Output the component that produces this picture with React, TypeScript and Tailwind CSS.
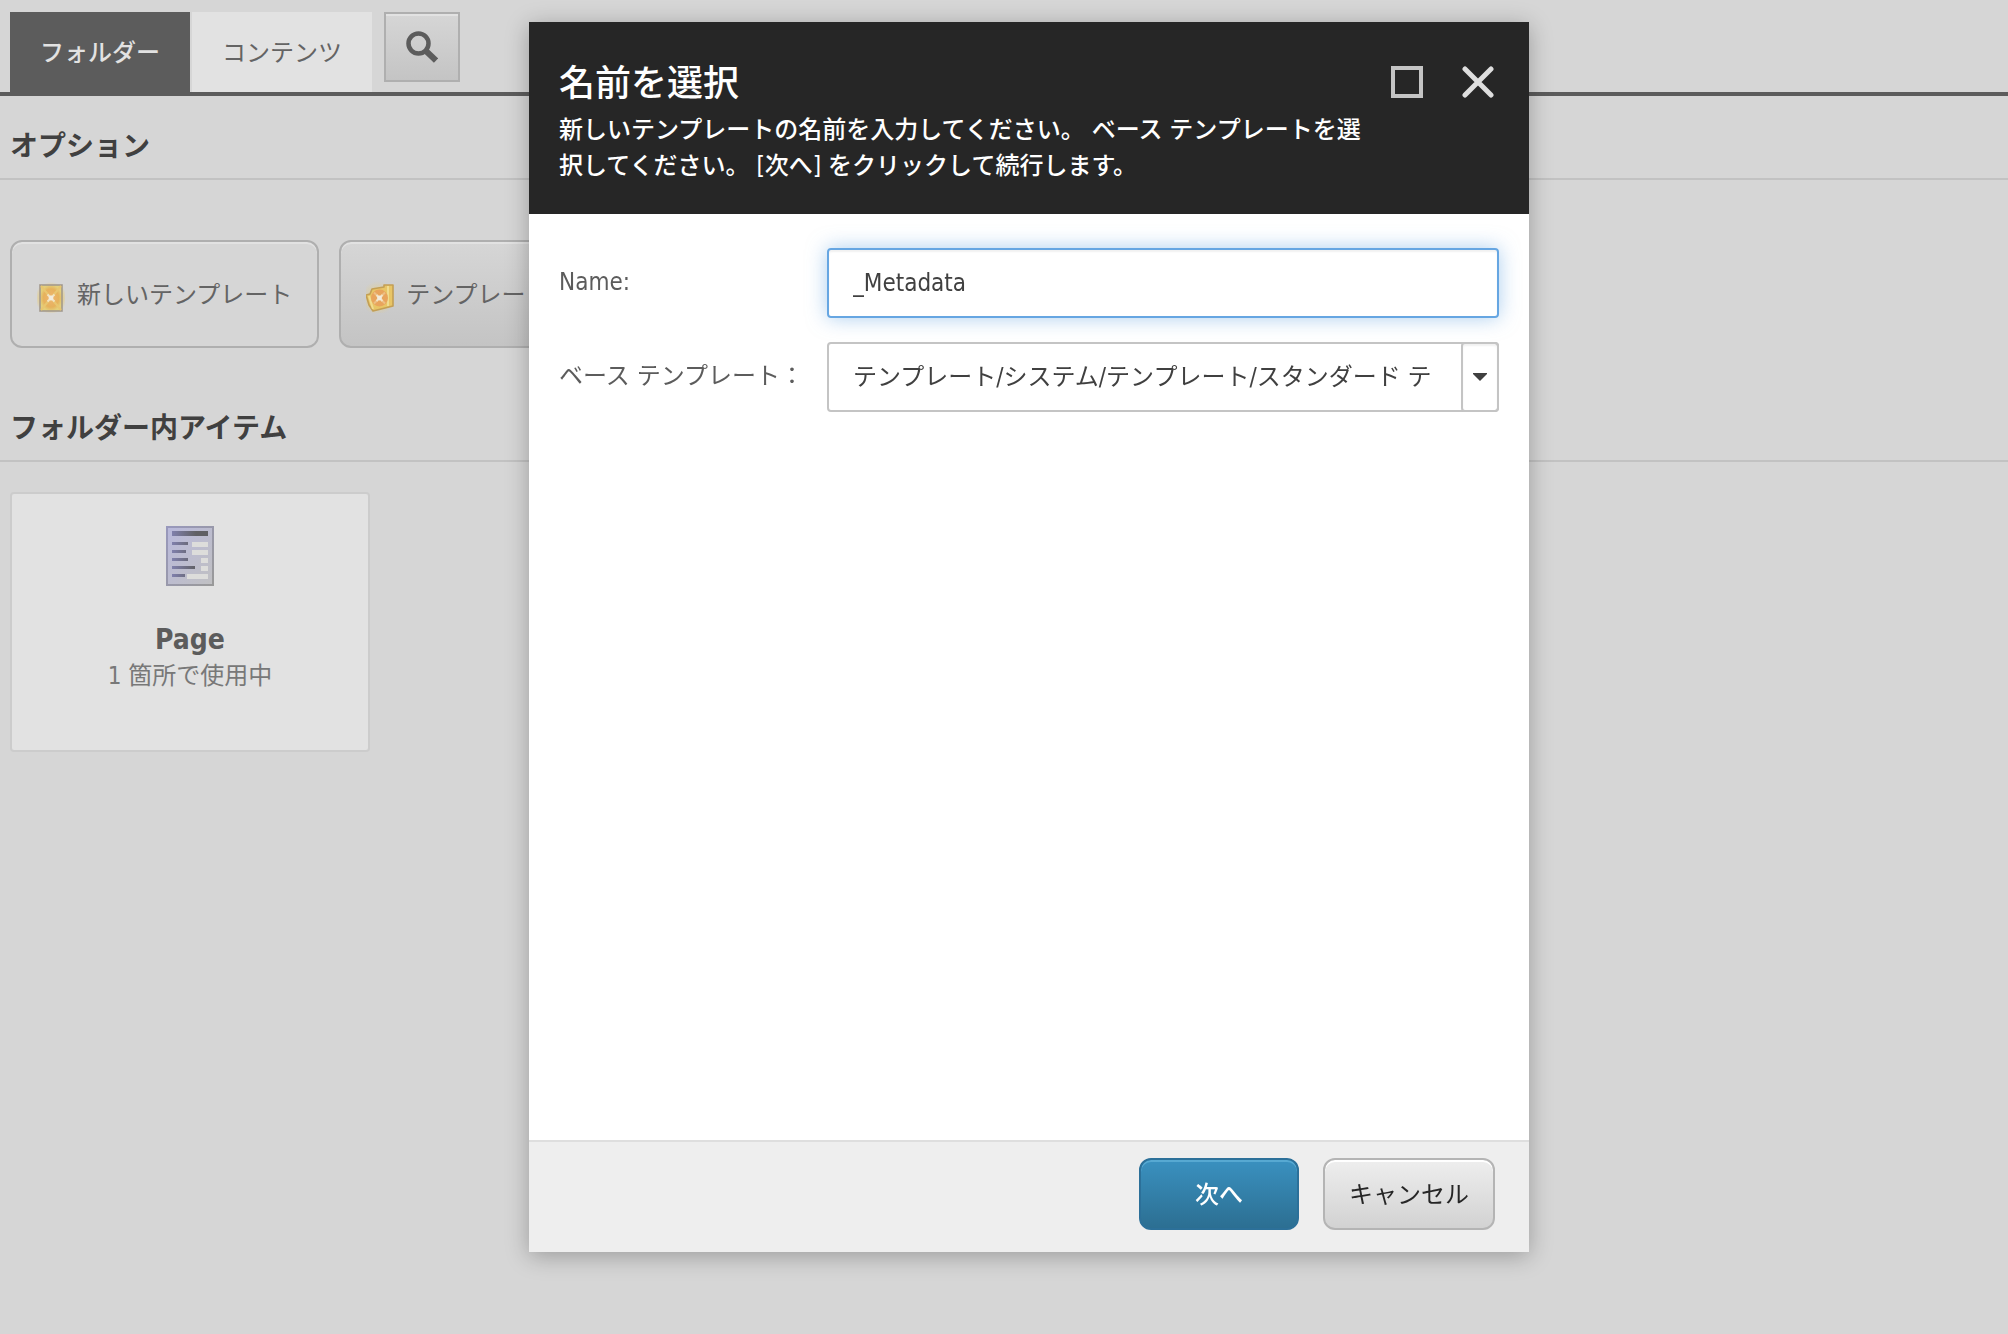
import type { ReactNode } from "react";

function SearchIcon() {
  return (
    <svg width="32" height="32" viewBox="0 0 32 32" fill="none" stroke="#5c5c5c">
      <circle cx="12.5" cy="12.5" r="10" strokeWidth="4.5" />
      <path d="M20 20l10 9.5" strokeWidth="6" />
    </svg>
  );
}

function NewTemplateIcon() {
  return (
    <svg width="28" height="36" viewBox="0 0 28 36">
      <defs>
        <radialGradient id="newGlow">
          <stop offset="0" stopColor="#f4e6c8" />
          <stop offset="0.25" stopColor="#ecb36a" />
          <stop offset="0.7" stopColor="#e6b25c" />
          <stop offset="1" stopColor="#e4cf7a" />
        </radialGradient>
        <radialGradient id="newHalo">
          <stop offset="0.6" stopColor="#ecc962" stopOpacity="0.8" />
          <stop offset="1" stopColor="#ecc962" stopOpacity="0" />
        </radialGradient>
      </defs>
      <ellipse cx="14" cy="21" rx="16" ry="16" fill="url(#newHalo)" />
      <rect x="3" y="8" width="22" height="26" fill="url(#newGlow)" stroke="#a39a8e" strokeWidth="1.6" />
      <path d="M4 9l20 24M24 9L4 33" stroke="#e9c670" strokeWidth="2" />
      <path d="M10.500 17.500l7 7M17.500 17.500l-7 7" stroke="#f2e3c4" strokeWidth="2" />
      <circle cx="14" cy="21" r="2.4" fill="#f2ebdc" />
    </svg>
  );
}

function TemplateFolderIcon() {
  return (
    <svg width="28" height="36" viewBox="0 1 28 36">
      <defs>
        <radialGradient id="folderGlow">
          <stop offset="0" stopColor="#e9cf7c" stopOpacity="0.9" />
          <stop offset="1" stopColor="#e9cf7c" stopOpacity="0" />
        </radialGradient>
      </defs>
      <ellipse cx="12" cy="22" rx="17" ry="17" fill="url(#folderGlow)" />
      <path
        d="M0 19l4-1 2-5 12-2V9h9v21L7 35 3 29z"
        fill="#e8c566"
        stroke="#c39f55"
        strokeWidth="1.6"
        strokeLinejoin="round"
      />
      <path d="M22 10v20M3 20l4 13" stroke="#f0dc90" strokeWidth="2" />
      <circle cx="13.500" cy="22" r="8.500" fill="#e8a45c" />
      <path d="M8 16.500l11 11M19 16.500l-11 11" stroke="#edbf84" strokeWidth="2" />
      <path d="M10.500 19l6 6M16.500 19l-6 6" stroke="#f2e3c4" strokeWidth="2" />
      <circle cx="13.500" cy="22" r="2.400" fill="#f2ebdc" />
    </svg>
  );
}

function PageIcon() {
  return (
    <svg width="48" height="60" viewBox="0 0 48 60">
      <defs>
        <linearGradient id="pageFill" x1="0" y1="0" x2="1" y2="1">
          <stop offset="0" stopColor="#b9b9dc" />
          <stop offset="1" stopColor="#c0c0c2" />
        </linearGradient>
        <linearGradient id="pageEdge" x1="0" y1="0" x2="1" y2="1">
          <stop offset="0" stopColor="#9898bc" />
          <stop offset="1" stopColor="#999999" />
        </linearGradient>
        <linearGradient id="pageInk" gradientUnits="userSpaceOnUse" x1="6" y1="0" x2="30" y2="0">
          <stop offset="0" stopColor="#8080ac" />
          <stop offset="1" stopColor="#606064" />
        </linearGradient>
      </defs>
      <rect x="1" y="1" width="46" height="58" fill="url(#pageFill)" stroke="url(#pageEdge)" strokeWidth="2" />
      <g fill="url(#pageInk)">
        <rect x="6" y="5" width="36" height="5" />
        <rect x="6" y="16" width="16" height="3" />
        <rect x="6" y="24" width="14" height="3" />
        <rect x="6" y="32" width="16" height="3" />
        <rect x="6" y="40" width="23" height="3" />
        <rect x="6" y="48" width="13" height="3" />
      </g>
      <g fill="#dddddb">
        <rect x="26" y="16" width="16" height="5" />
        <rect x="26" y="24" width="16" height="5" />
        <rect x="35" y="32" width="7" height="5" />
        <rect x="35" y="40" width="7" height="5" />
        <rect x="21" y="48" width="21" height="5" />
      </g>
    </svg>
  );
}

function SectionTitle({ children }: { children: ReactNode }) {
  return (
    <h2 className="border-b-2 border-[#c2c2c2] pt-[33px] pb-[13px] pl-[10px] text-[28px] leading-9 font-bold text-[#404040]">
      {children}
    </h2>
  );
}

function FolderPage() {
  return (
    <main>
      <nav className="flex items-start border-b-4 border-[#5c5c5c] pt-3 pl-[10px]">
        <button className="h-20 w-[180px] bg-[#5c5c5c] pt-0.5 font-medium text-[#e2e2e2]">フォルダー</button>
        <button className="ml-0.5 h-20 w-[180px] bg-[#e2e2e2] pt-0.5 text-[#646464]">コンテンツ</button>
        <button
          aria-label="検索"
          className="ml-3 flex h-[70px] w-[76px] items-center justify-center border-2 border-[#afafaf] bg-linear-to-b from-[#d6d6d6] to-[#c4c4c4] shadow-[inset_0_2px_0_#e2e2e2]"
        >
          <SearchIcon />
        </button>
      </nav>

      <section>
        <SectionTitle>オプション</SectionTitle>
        <div className="mt-[60px] flex gap-5 pl-[10px] text-[#646464]">
          <button className="flex h-[108px] items-center gap-3 rounded-xl border-2 border-[#afafaf] px-[25px] pt-0.5 shadow-[inset_0_2px_0_#e2e2e2]">
            <NewTemplateIcon />
            新しいテンプレート
          </button>
          <button className="flex h-[108px] min-w-[310px] items-center gap-3 rounded-xl border-2 border-[#afafaf] bg-linear-to-b from-[#d6d6d6] to-[#c4c4c4] px-[25px] pt-0.5 shadow-[inset_0_2px_0_#e2e2e2]">
            <TemplateFolderIcon />
            テンプレート
          </button>
        </div>
      </section>

      <section className="mt-[30px]">
        <SectionTitle>フォルダー内アイテム</SectionTitle>
        <div className="mt-[30px] flex pl-[10px]">
          <a
            href="#page"
            className="flex h-[260px] w-[360px] flex-col items-center rounded-sm border-2 border-[#cccccc] bg-[#e2e2e2] pt-8"
          >
            <PageIcon />
            <span className="mt-9 text-[28px] leading-9 font-bold text-[#5c5c5c]">Page</span>
            <span className="leading-9 text-[#787878]">1 箇所で使用中</span>
          </a>
        </div>
      </section>
    </main>
  );
}

function NameDialog() {
  return (
    <div
      role="dialog"
      aria-labelledby="dialog-title"
      className="flex h-[calc(100vh-104px)] w-full max-w-[1000px] flex-col bg-white shadow-[0_4px_22px_rgba(0,0,0,0.28)]"
    >
      <header className="flex items-start gap-4 bg-[#262626] pt-[38px] pr-[35px] pb-[30px] pl-[30px] text-white">
        <div className="flex-1">
          <h1 id="dialog-title" className="text-4xl leading-[48px] font-medium">
            名前を選択
          </h1>
          <p className="mt-1 leading-9 font-medium">
            新しいテンプレートの名前を入力してください。 ベース テンプレートを選択してください。 [次へ] をクリックして続行します。
          </p>
        </div>
        <div className="flex gap-[39px] pt-1.5">
          <button aria-label="最大化" className="size-8 border-4 border-[#c4c4c4]" />
          <button aria-label="閉じる" className="size-8">
            <svg width="32" height="32" viewBox="0 0 32 32" stroke="#dedede" strokeWidth="5" strokeLinecap="round">
              <path d="M3 3l26 26M29 3L3 29" />
            </svg>
          </button>
        </div>
      </header>

      <div className="grid flex-1 grid-cols-[268px_1fr] content-start gap-y-6 pt-[34px] pr-[30px] pl-[30px]">
        <label htmlFor="name" className="pt-4 leading-9 text-[#5c5c5c]">
          Name:
        </label>
        <input
          id="name"
          defaultValue="_Metadata"
          className="h-[70px] w-full rounded-sm border-2 border-[#66a6e2] px-6 text-[#404040] shadow-[0_0_20px_rgba(102,166,226,0.55),inset_0_2px_2px_rgba(0,0,0,0.06)] outline-none"
        />
        <label htmlFor="base" className="pt-4 leading-9 text-[#5c5c5c]">
          ベース テンプレート：
        </label>
        <div className="relative">
          <select
            id="base"
            className="h-[70px] w-full appearance-none rounded-sm border-2 border-[#c4c4c4] bg-white pr-16 pl-6 text-[#404040]"
          >
            <option>テンプレート/システム/テンプレート/スタンダード テンプレート</option>
          </select>
          <span className="pointer-events-none absolute inset-y-0 right-0 flex w-[38px] items-center justify-center rounded-sm border-2 border-[#c4c4c4] shadow-[inset_0_2px_2px_rgba(0,0,0,0.06)]">
            <svg width="14" height="8" viewBox="0 0 14 8" fill="#404040">
              <path d="M0 0h14v1L7 8 0 1z" />
            </svg>
          </span>
        </div>
      </div>

      <footer className="flex justify-end gap-6 border-t-2 border-[#dedede] bg-[#eeeeee] pt-4 pr-[34px] pb-[22px]">
        <button className="h-[72px] w-40 rounded-xl border-2 border-[#2c7099] bg-linear-to-b from-[#3a91c0] to-[#2c6f92] pt-0.5 font-medium text-white shadow-[inset_0_2px_0_#57a9d2]">
          次へ
        </button>
        <button className="h-[72px] w-[172px] rounded-xl border-2 border-[#b4b4b4] bg-linear-to-b from-[#eeeeee] to-[#d2d2d2] pt-0.5 text-[#262626] shadow-[inset_0_2px_0_#ffffff]">
          キャンセル
        </button>
      </footer>
    </div>
  );
}

export default function App() {
  return (
    <div className="min-h-screen bg-[#d6d6d6] font-['DejaVu_Sans_Condensed','Noto_Sans_CJK_JP',sans-serif] text-2xl">
      <FolderPage />
      {/* Dialog layer */}
      <div className="fixed inset-0 flex items-start justify-center pt-[22px] pl-[50px]">
        <NameDialog />
      </div>
    </div>
  );
}
